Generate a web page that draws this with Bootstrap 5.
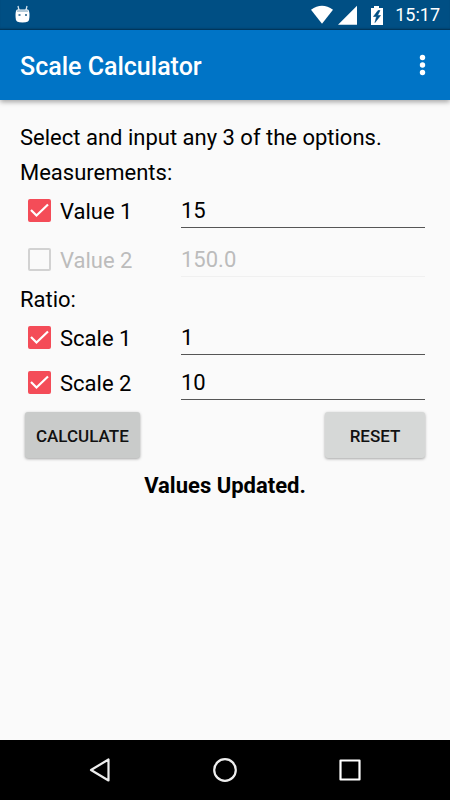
<!DOCTYPE html>
<html lang="en">
<head>
<meta charset="utf-8">
<meta name="viewport" content="width=device-width, initial-scale=1">
<title>Scale Calculator</title>
<link href="https://cdn.jsdelivr.net/npm/bootstrap@5.3.0/dist/css/bootstrap.min.css" rel="stylesheet">
<style>
body { font-family: Roboto, "Liberation Sans", sans-serif; font-size: 22px; line-height: 35px; color: #000; background: #fafafa; }
.status-bar { height: 30px; padding: 0 10px 0 14px; background: #004f84; color: #fff; font-size: 18px; line-height: 32px; box-shadow: inset 0 -2px 2px -1px rgba(0,0,0,.35); }
.app-bar { height: 70px; padding: 0 20px; background: #0074c6; box-shadow: 0 2px 5px rgba(0,0,0,.35); }
.app-title { padding-top: 3px; font-size: 25px; font-weight: 500; line-height: 34px; }
.icon-btn { background: none; border: 0; padding: 0; line-height: 0; }
.page { padding: 20px; }
.section-title { margin: 0; font-size: 22px; font-weight: 400; line-height: 35px; }
.ratio-title { margin-top: 3px; }
.field { min-height: 40px; padding: 0 5px 0 8px; }
.field .form-check-input { width: 23px; height: 23px; margin: 0; border: 2px solid #757575; border-radius: 2px; background-color: transparent; box-shadow: none; }
.field .form-check-input:checked { border-color: #f44c58; background-color: #f44c58; background-size: 23px 23px; background-image: url("data:image/svg+xml,%3Csvg xmlns='http://www.w3.org/2000/svg' viewBox='0 0 23 23'%3E%3Cpath d='M3 11 8.500 16.500 20 5.500' fill='none' stroke='white' stroke-width='2.2'/%3E%3C/svg%3E"); background-position: center; }
.field .form-check-input:disabled { border-color: #d2d2d2; opacity: 1; }
.field-label { width: 121px; margin: 0 0 0 9px; padding-top: 2px; flex: none; }
.field .form-check-input:disabled ~ .field-label { color: #bcbcbc; opacity: 1; }
.field .form-control { height: 36px; min-width: 0; padding: 2px 0 0; border: 0; border-bottom: 1px solid #555; border-radius: 0; background: transparent; color: #000; font-size: 22px; line-height: 33px; box-shadow: none; }
.field .form-control:disabled { color: #bcbcbc; border-color: #f0f0f0; -webkit-text-fill-color: #bcbcbc; }
.value-second { margin-top: 9px; }
.scale-second { margin-top: 5px; }
.actions { padding: 10px 5px 0; }
.btn-raised { height: 46px; padding: 2px 11px 0; border: 0; border-radius: 3px; background: #d6d8d7; color: #111; font-size: 17px; font-weight: 500; line-height: 44px; box-shadow: 0 1px 3px rgba(0,0,0,.35); }
.btn-raised.is-pressed { background: #c9cbca; }
.btn-reset { min-width: 100px; }
.message { padding-top: 10px; font-weight: 700; }
.nav-keys { height: 60px; background: #000; }
.nav-keys .icon-btn { width: 125px; height: 60px; }
</style>
</head>
<body class="d-flex flex-column min-vh-100">
<div class="status-bar d-flex align-items-center justify-content-between">
  <svg width="17" height="20" viewBox="0 0 17 20" aria-hidden="true">
    <path d="M4 1 5.2 6M13 1 11.8 6" stroke="#d5e3ed" stroke-width="1.3" fill="none"/>
    <path d="M3 4.500h11q1.500 1 1.500 5.500 0 5-1.500 6.500-2 1-5.500 1t-5.500-1Q1.500 15 1.500 10q0-4.500 1.500-5.500z" fill="#fff"/>
    <path d="M3.500 5h10l.8 2H2.700z" fill="#b4cad8"/>
    <path d="M4.500 9h2v2h-2zM11 9h2v2h-2z" fill="#5484a5"/>
  </svg>
  <div class="d-flex align-items-center">
    <svg width="84" height="20" viewBox="0 0 84 20" aria-hidden="true" fill="#fff">
      <path d="M0 4.800Q11 -3.300 22 4.800L11 18.800z"/>
      <path d="M46 .8v19H27z"/>
      <path d="M63 1h5v2h4v17H60V3h3z"/>
      <path d="M67 5.500 62.500 11.500h3l-1.500 6 5.500-7h-3l2.500-5z" fill="#004f84" stroke="#004f84" stroke-width=".6"/>
    </svg>
    <time>15:17</time>
  </div>
</div>
<header class="app-bar d-flex align-items-center justify-content-between text-white">
  <h1 class="app-title mb-0">Scale Calculator</h1>
  <button class="icon-btn text-white" type="button" aria-label="More options">
    <svg width="15" height="24" viewBox="0 0 15 24" fill="currentColor"><circle cx="7.500" cy="4.500" r="2.700"/><circle cx="7.500" cy="12" r="2.700"/><circle cx="7.500" cy="19.500" r="2.700"/></svg>
  </button>
</header>
<main class="page flex-grow-1">
  <form>
    <p class="m-0">Select and input any 3 of the options.</p>
    <h2 class="section-title">Measurements:</h2>
    <div class="field d-flex align-items-center">
      <input class="form-check-input flex-shrink-0" type="checkbox" id="use-value1" checked>
      <label class="field-label" for="use-value1">Value 1</label>
      <input class="form-control" type="text" inputmode="decimal" aria-label="Value 1 amount" value="15">
    </div>
    <div class="field value-second d-flex align-items-center">
      <input class="form-check-input flex-shrink-0" type="checkbox" id="use-value2" disabled>
      <label class="field-label" for="use-value2">Value 2</label>
      <input class="form-control" type="text" inputmode="decimal" aria-label="Value 2 amount" value="150.0" disabled>
    </div>
    <h2 class="section-title ratio-title">Ratio:</h2>
    <div class="field d-flex align-items-center">
      <input class="form-check-input flex-shrink-0" type="checkbox" id="use-scale1" checked>
      <label class="field-label" for="use-scale1">Scale 1</label>
      <input class="form-control" type="text" inputmode="decimal" aria-label="Scale 1 amount" value="1">
    </div>
    <div class="field scale-second d-flex align-items-center">
      <input class="form-check-input flex-shrink-0" type="checkbox" id="use-scale2" checked>
      <label class="field-label" for="use-scale2">Scale 2</label>
      <input class="form-control" type="text" inputmode="decimal" aria-label="Scale 2 amount" value="10">
    </div>
    <div class="actions d-flex justify-content-between">
      <button class="btn btn-raised is-pressed" type="button">CALCULATE</button>
      <button class="btn btn-raised btn-reset" type="button">RESET</button>
    </div>
    <p class="message m-0 text-center" role="status">Values Updated.</p>
  </form>
</main>
<nav class="nav-keys d-flex justify-content-center" aria-label="System">
  <button class="icon-btn" type="button" aria-label="Back"><svg width="26" height="26" viewBox="0 0 26 26" fill="none" stroke="#eee" stroke-width="2.200" stroke-linejoin="round"><path d="M21.500 2.500v21L4 13z"/></svg></button>
  <button class="icon-btn" type="button" aria-label="Home"><svg width="26" height="26" viewBox="0 0 26 26" fill="none" stroke="#eee" stroke-width="2.200"><circle cx="13" cy="13" r="10.800"/></svg></button>
  <button class="icon-btn" type="button" aria-label="Recent apps"><svg width="26" height="26" viewBox="0 0 26 26" fill="none" stroke="#fff" stroke-width="2.200" stroke-linejoin="round"><path d="M3.500 3.500h19v19h-19z"/></svg></button>
</nav>
<script src="https://cdn.jsdelivr.net/npm/bootstrap@5.3.0/dist/js/bootstrap.bundle.min.js"></script>
</body>
</html>
